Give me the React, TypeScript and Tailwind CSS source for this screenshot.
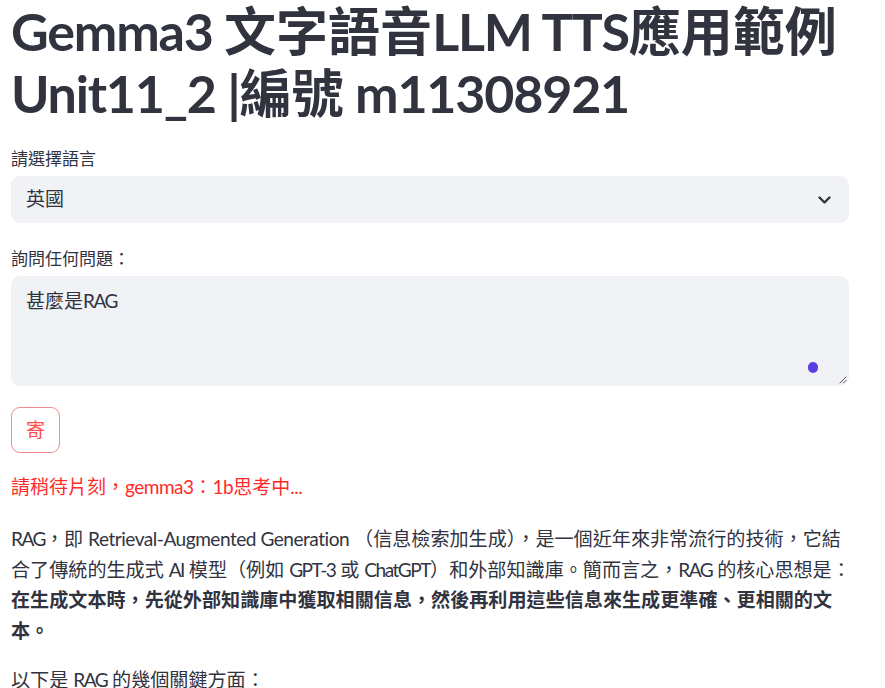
import React from "react";

const FONT = { fontFamily: 'Lato, "Noto Sans CJK TC", "Noto Sans", sans-serif' };

function T({ children }: { children: React.ReactNode }) {
  return <span className="tracking-[-1.2px]">{children}</span>;
}
function U({ children }: { children: React.ReactNode }) {
  return <span className="tracking-[-1.5px]">{children}</span>;
}
function W({ children }: { children: React.ReactNode }) {
  return <span className="tracking-[-0.5px]">{children}</span>;
}

export default function App() {
  return (
    <div className="w-[885px] h-[688px] overflow-hidden bg-white text-[#31333f]" style={FONT}>
      <div className="pl-[11px] w-[849px]">
        <h1 className="text-[52px] font-bold leading-[62px] whitespace-nowrap">
          <span className="block">
            <T>Gemma3 </T>文字語音<T>LLM TTS</T>應用範例
          </span>
          <span className="block">
            <T>Unit11_2 |</T>編號<T> m11308921</T>
          </span>
        </h1>

        <div className="mt-[24px] text-[17px] leading-[22px]">請選擇語言</div>
        <div className="mt-[6px] h-[47px] rounded-[9px] bg-[#f0f2f6] flex items-center justify-between pl-[15px] pr-[18px]">
          <span className="text-[19px]">英國</span>
          <svg width="13" height="8" viewBox="0 0 13 8" fill="none">
            <path d="M1.5 1.5 L6.5 6.5 L11.5 1.5" stroke="#31333f" strokeWidth="2.4" strokeLinecap="round" strokeLinejoin="round" />
          </svg>
        </div>

        <div className="mt-[25px] text-[17px] leading-[22px]">詢問任何問題：</div>
        <div className="relative mt-[6px] h-[110px] rounded-[9px] bg-[#f0f2f6]">
          <div className="px-[15px] pt-[10px] text-[19px] leading-[30px]">
            甚麼是<U>RAG</U>
          </div>
          <div className="absolute left-[797px] top-[86px] w-[10px] h-[11px] rounded-full bg-[#5b3fe0]" />
          <svg className="absolute right-[2px] bottom-[2px]" width="8" height="8" viewBox="0 0 8 8">
            <path d="M7 1 L1 7 M7 4.5 L4.5 7" stroke="#555" strokeWidth="1" strokeLinecap="round" />
          </svg>
        </div>

        <button className="mt-[21px] w-[49px] h-[46px] rounded-[9px] border border-[#f08c8c] text-[#ff4b4b] text-[19px] flex items-center justify-center">
          寄
        </button>

        <p className="mt-[19px] text-[19px] leading-[30px] text-[#ff2b2b] whitespace-nowrap">請稍待片刻，<W>gemma3</W>：<W>1b</W>思考中<W>...</W></p>

        <p className="mt-[22px] text-[19.1px] leading-[30.5px] whitespace-nowrap">
          <span className="block">
            <U>RAG</U>，即 <W>Retrieval-Augmented Generation</W> （信息檢索加生成），是一個近年來非常流行的技術，它結
          </span>
          <span className="block">
            合了傳統的生成式 <U>AI</U> 模型（例如 <U>GPT-3</U> 或 <U>ChatGPT</U>）和外部知識庫。簡而言之，<U>RAG</U> 的核心思想是：
          </span>
          <span className="block font-bold">在生成文本時，先從外部知識庫中獲取相關信息，然後再利用這些信息來生成更準確、更相關的文</span>
          <span className="block font-bold">本。</span>
        </p>
        <p className="mt-[19px] text-[19.1px] leading-[30.5px] whitespace-nowrap">
          以下是 <U>RAG</U> 的幾個關鍵方面：
        </p>
      </div>
    </div>
  );
}
